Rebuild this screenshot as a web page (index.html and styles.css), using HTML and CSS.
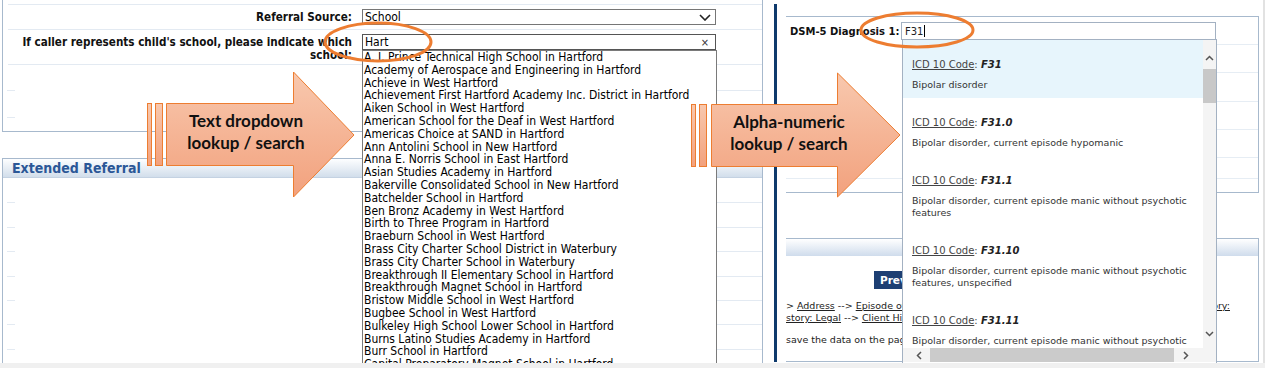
FILE: index.html
```html
<!DOCTYPE html>
<html lang="en">
<head>
    <meta charset="UTF-8">
    <title>Lookup fields</title>
    <link rel="stylesheet" href="styles.css">
</head>
<body>
    <div class="shot">
        <!-- left capture: referral form with school lookup -->
        <section class="pane pane-left">
            <div class="box box-top">
                <div class="form-row row-source">
                    <label class="lbl">Referral Source:</label>
                    <div class="field field-select">
                        <span>School</span>
                        <svg class="chev" width="12" height="7" viewBox="0 0 12 7"><polyline points="1,1 6,6 11,1" fill="none" stroke="#222" stroke-width="1.6"/></svg>
                    </div>
                </div>
                <div class="form-row row-school">
                    <label class="lbl">If caller represents child's school, please indicate which school:</label>
                    <div class="field field-text">
                        <span>Hart</span>
                        <span class="clear">&times;</span>
                    </div>
                </div>
                <div class="rule r26"></div>
                <div class="rule r27"></div>
            </div>

            <div class="box box-ext">
                <div class="box-head">Extended Referral</div>
                <div class="rule r25"></div>
                <div class="rule r25"></div>
                <div class="rule r24"></div>
                <div class="rule r25"></div>
                <div class="rule r24"></div>
                <div class="rule r24"></div>
                <div class="rule r25"></div>
            </div>

            <ul class="school-list">
                <li>A. I. Prince Technical High School in Hartford</li>
                <li>Academy of Aerospace and Engineering in Hartford</li>
                <li>Achieve in West Hartford</li>
                <li>Achievement First Hartford Academy Inc. District in Hartford</li>
                <li>Aiken School in West Hartford</li>
                <li>American School for the Deaf in West Hartford</li>
                <li>Americas Choice at SAND in Hartford</li>
                <li>Ann Antolini School in New Hartford</li>
                <li>Anna E. Norris School in East Hartford</li>
                <li>Asian Studies Academy in Hartford</li>
                <li>Bakerville Consolidated School in New Hartford</li>
                <li>Batchelder School in Hartford</li>
                <li>Ben Bronz Academy in West Hartford</li>
                <li>Birth to Three Program in Hartford</li>
                <li>Braeburn School in West Hartford</li>
                <li>Brass City Charter School District in Waterbury</li>
                <li>Brass City Charter School in Waterbury</li>
                <li>Breakthrough II Elementary School in Hartford</li>
                <li>Breakthrough Magnet School in Hartford</li>
                <li>Bristow Middle School in West Hartford</li>
                <li>Bugbee School in West Hartford</li>
                <li>Bulkeley High School Lower School in Hartford</li>
                <li>Burns Latino Studies Academy in Hartford</li>
                <li>Burr School in Hartford</li>
                <li>Capital Preparatory Magnet School in Hartford</li>
            </ul>
        </section>

        <!-- right capture: diagnosis lookup -->
        <section class="pane pane-right">
            <div class="frame">
                <div class="box-right">
                    <div class="drow drow-first">
                        <label class="dlbl">DSM-5 Diagnosis 1:</label>
                        <div class="dx-input"><span>F31</span><i class="caret"></i></div>
                    </div>
                    <div class="drow h28"></div>
                    <div class="drow h29"></div>
                    <div class="drow h28"></div>
                    <div class="drow h28"></div>
                    <div class="drow h21 full"></div>
                </div>

                <div class="sec-head"></div>
                <div class="box-lower">
                    <button class="btn-prev" type="button">Previous</button>
                    <div class="crumbs">
                        <p class="crumb-line"><span>&gt; <a>Address</a> --&gt; <a>Episode of Care</a></span><a>History:</a></p>
                        <p><a>story: Legal</a> --&gt; <a>Client History</a></p>
                        <p class="note">save the data on the page</p>
                    </div>
                </div>
            </div>

            <div class="dx-list">
                <div class="dx-items">
                    <div class="dx-item active">
                        <p class="code"><u>ICD 10 Code</u>: <b>F31</b></p>
                        <p class="desc">Bipolar disorder</p>
                    </div>
                    <div class="dx-item">
                        <p class="code"><u>ICD 10 Code</u>: <b>F31.0</b></p>
                        <p class="desc">Bipolar disorder, current episode hypomanic</p>
                    </div>
                    <div class="dx-item">
                        <p class="code"><u>ICD 10 Code</u>: <b>F31.1</b></p>
                        <p class="desc">Bipolar disorder, current episode manic without psychotic features</p>
                    </div>
                    <div class="dx-item">
                        <p class="code"><u>ICD 10 Code</u>: <b>F31.10</b></p>
                        <p class="desc">Bipolar disorder, current episode manic without psychotic features, unspecified</p>
                    </div>
                    <div class="dx-item">
                        <p class="code"><u>ICD 10 Code</u>: <b>F31.11</b></p>
                        <p class="desc">Bipolar disorder, current episode manic without psychotic features, mild</p>
                    </div>
                </div>
                <div class="vscroll">
                    <svg width="9" height="6" viewBox="0 0 9 6"><polyline points="1,5 4.5,1.5 8,5" fill="none" stroke="#555" stroke-width="1.5"/></svg>
                    <div class="vthumb"></div>
                    <div class="grow"></div>
                    <svg width="9" height="6" viewBox="0 0 9 6"><polyline points="1,1 4.5,4.5 8,1" fill="none" stroke="#555" stroke-width="1.5"/></svg>
                </div>
                <div class="hscroll">
                    <svg width="6" height="9" viewBox="0 0 6 9"><polyline points="5,1 1.5,4.5 5,8" fill="none" stroke="#555" stroke-width="1.5"/></svg>
                    <div class="hthumb"></div>
                    <svg width="6" height="9" viewBox="0 0 6 9"><polyline points="1,1 4.5,4.5 1,8" fill="none" stroke="#555" stroke-width="1.5"/></svg>
                </div>
            </div>
        </section>
    </div>
    <div class="strip"></div>

    <!-- slide annotations drawn over both captures -->
    <svg class="callouts" width="1265" height="368" viewBox="0 0 1265 368">
        <defs>
            <linearGradient id="salmon" x1="0" y1="0" x2="0" y2="1">
                <stop offset="0" stop-color="#f8c8ae"/>
                <stop offset="1" stop-color="#f2a17d"/>
            </linearGradient>
        </defs>
        <g class="arrow">
            <rect x="147.5" y="103.5" width="4" height="62"/>
            <rect x="155.5" y="103.5" width="7" height="62"/>
            <path d="M166.5 103.5H293.5V72L354 135 293.5 197V165.5H166.5Z"/>
            <text x="246" y="127">Text dropdown</text>
            <text x="246" y="149">lookup / search</text>
        </g>
        <g class="arrow">
            <rect x="691.5" y="104.5" width="4" height="62"/>
            <rect x="699.5" y="104.5" width="7" height="62"/>
            <path d="M711.5 104.5H837.5V73L900 135 837.5 197V166.5H711.5Z"/>
            <text x="789" y="128">Alpha-numeric</text>
            <text x="789" y="150">lookup / search</text>
        </g>
        <ellipse class="ring" cx="378" cy="42" rx="53" ry="19"/>
        <ellipse class="ring" cx="917" cy="30" rx="56" ry="17"/>
    </svg>
</body>
</html>
```

FILE: styles.css
```css
* {
    margin: 0;
    padding: 0;
    box-sizing: border-box;
}

body {
    width: 1265px;
    height: 368px;
    overflow: hidden;
    position: relative;
    background-color: #ffffff;
    color: #000000;
    font-family: "DejaVu Sans Condensed", "DejaVu Sans", Verdana, sans-serif;
    font-stretch: condensed;
}

.shot {
    display: flex;
    height: 363px;
    overflow: hidden;
}

.strip {
    height: 5px;
    background-color: #f0f0f0;
}

/* ---------- left capture ---------- */

.pane-left {
    width: 774px;
    position: relative;
}

.box {
    margin-left: 2px;
    width: 761px;
    border-left: 1px solid #a7b9cd;
    border-right: 1px solid #a7b9cd;
}

.box-top {
    height: 132px;
    padding-top: 4px;
    border-bottom: 1px solid #a7b9cd;
}

.form-row {
    display: flex;
    gap: 10px;
    margin-left: 5px;
    border-top: 1px solid #e3eaf2;
}

.row-source {
    height: 25px;
    align-items: center;
}

.row-school {
    height: 36px;
    align-items: flex-start;
    border-bottom: 1px solid #e3eaf2;
}

.lbl {
    width: 344px;
    text-align: right;
    font-size: 11.6px;
    font-weight: bold;
    line-height: 13px;
    color: #111;
}

.row-school .lbl {
    padding-top: 6px;
}

.field {
    width: 354px;
    height: 16px;
    display: flex;
    align-items: center;
    justify-content: space-between;
    padding: 0 4px 0 2px;
    border: 1px solid #767676;
    font-size: 12px;
    background-color: #fff;
}

.field-text {
    margin-top: 4px;
    border-color: #555;
}

.clear {
    font-size: 11px;
    color: #333;
    margin-right: 2px;
}

.rule {
    background:
        linear-gradient(#e3eaf2, #e3eaf2) 4px 100% / 8px 1px no-repeat,
        linear-gradient(#e3eaf2, #e3eaf2) 713px 100% / 46px 1px no-repeat;
}

.r24 { height: 24px; }
.r25 { height: 25px; }
.r26 { height: 26px; }
.r27 { height: 27px; }

.box-ext {
    margin-top: 26px;
    height: 210px;
    border-top: 1px solid #a7b9cd;
}

.box-head {
    height: 19px;
    padding-left: 9px;
    line-height: 18px;
    font-size: 14px;
    font-weight: bold;
    color: #2b5797;
    background: linear-gradient(#fdfeff, #d2deeb);
    border-bottom: 1px solid #c4d2e2;
}

.school-list {
    position: absolute;
    left: 362px;
    top: 50px;
    width: 355px;
    height: 330px;
    list-style: none;
    padding: 0 1px;
    border: 1px solid #7a7a7a;
    background-color: #fff;
    font-size: 12px;
    line-height: 12.8px;
    white-space: nowrap;
    overflow: hidden;
}

/* ---------- right capture ---------- */

.pane-right {
    flex: 1;
    position: relative;
    border-right: 2px solid #e2e2e2;
    font-family: "DejaVu Sans", Verdana, sans-serif;
    font-stretch: normal;
}

.frame {
    margin-top: 4px;
    height: 358px;
    padding: 12px 0 0 9px;
    border-left: 3px solid #0e3a6c;
}

.box-right {
    width: 473px;
    height: 177px;
    border-top: 1px solid #a7b9cd;
    border-right: 1px solid #a7b9cd;
    border-bottom: 1px solid #a7b9cd;
}

.drow {
    display: flex;
    align-items: center;
    background: linear-gradient(#e6edf4, #e6edf4) 430px 100% / 42px 1px no-repeat;
}

.drow.full {
    background: linear-gradient(#e6edf4, #e6edf4) 0 100% / 100% 1px no-repeat;
}

.drow-first {
    height: 28px;
    padding-left: 4px;
}

.h21 { height: 21px; }
.h28 { height: 28px; }
.h29 { height: 29px; }

.dlbl {
    width: 111px;
    white-space: nowrap;
    font-size: 10px;
    font-weight: bold;
    color: #111;
}

.dx-input {
    width: 315px;
    height: 18px;
    display: flex;
    align-items: center;
    padding-left: 3px;
    border: 1px solid #a3b1c2;
    font-size: 10px;
    color: #222;
}

.caret {
    display: block;
    width: 1px;
    height: 12px;
    margin-left: 1px;
    background-color: #000;
}

.sec-head {
    margin-top: 45px;
    width: 473px;
    height: 18px;
    border-top: 1px solid #a7b9cd;
    border-right: 1px solid #a7b9cd;
    background: linear-gradient(#ffffff, #cfdcec);
}

.box-lower {
    width: 473px;
    height: 106px;
    padding-top: 15px;
    border-right: 1px solid #a7b9cd;
    border-bottom: 1px solid #a7b9cd;
    overflow: hidden;
    font-size: 9.5px;
    color: #222;
}

.btn-prev {
    display: block;
    margin-left: 88px;
    height: 18px;
    padding: 0 6px;
    border: none;
    background-color: #1d3f73;
    color: #fff;
    font-family: inherit;
    font-size: 10.5px;
    font-weight: bold;
}

.crumbs {
    margin-top: 11px;
    padding-right: 28px;
    line-height: 12px;
}

.crumbs a {
    text-decoration: underline;
    color: #222;
}

.crumb-line {
    display: flex;
    justify-content: space-between;
}

.note {
    margin-top: 10px;
}

.dx-list {
    position: absolute;
    left: 128px;
    top: 39px;
    width: 315px;
    height: 330px;
    border: 1px solid #a3b1c2;
    background-color: #fff;
    display: grid;
    grid-template-columns: 1fr 13px;
    grid-template-rows: 308px 14px;
    overflow: hidden;
}

.dx-items {
    overflow: hidden;
    font-size: 9.5px;
    line-height: 12px;
    color: #333;
}

.dx-item {
    padding: 19px 9px 7px;
}

.dx-item.active {
    background-color: #e7f5fc;
}

.code {
    margin-bottom: 8px;
    font-size: 10px;
    color: #444;
}

.code b {
    font-style: italic;
    color: #222;
}

.vscroll {
    display: flex;
    flex-direction: column;
    align-items: center;
    padding: 15px 0 11px;
    background-color: #f4f4f4;
}

.vthumb {
    margin-top: 8px;
    width: 13px;
    height: 34px;
    background-color: #c8c8c8;
}

.grow {
    flex: 1;
}

.hscroll {
    grid-column: 1 / 3;
    display: flex;
    align-items: center;
    padding: 0 27px 0 13px;
    background-color: #f4f4f4;
}

.hthumb {
    margin: 0 9px 0 8px;
    flex: 1;
    height: 14px;
    background-color: #cbcbcb;
}

/* ---------- annotations ---------- */

.callouts {
    position: absolute;
    left: 0;
    top: 0;
    pointer-events: none;
}

.arrow rect,
.arrow path {
    fill: url(#salmon);
    stroke: #ed7d31;
    stroke-width: 1;
}

.arrow text {
    font-family: Lato, "Open Sans", sans-serif;
    font-size: 17px;
    font-weight: bold;
    fill: #111;
    text-anchor: middle;
}

.ring {
    fill: none;
    stroke: #ed7d31;
    stroke-width: 3;
}
```
